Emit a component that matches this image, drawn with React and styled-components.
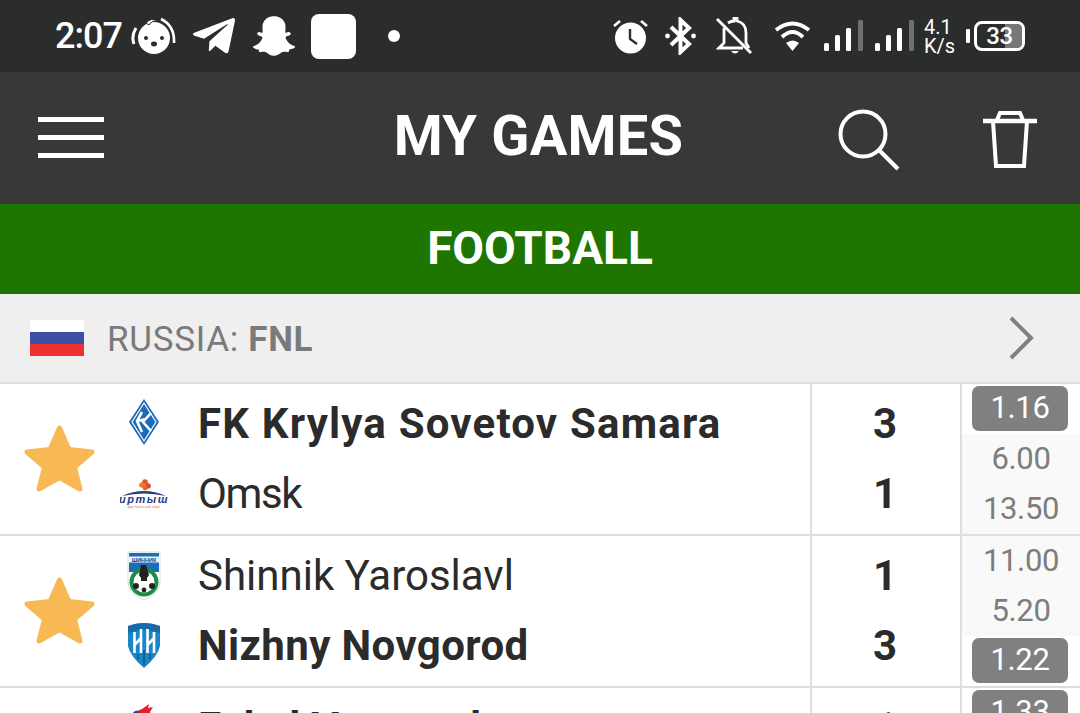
import styled, { createGlobalStyle } from "styled-components";
import { FaTelegramPlane, FaSnapchatGhost } from "react-icons/fa";

const matches = [
  {
    home: { name: "FK Krylya Sovetov Samara", logo: "krylya", win: true, score: 3, track: 1.2 },
    away: { name: "Omsk", logo: "irtysh", score: 1, track: -1.4 },
    odds: ["1.16", "6.00", "13.50"],
    picked: 0,
    star: true,
  },
  {
    home: { name: "Shinnik Yaroslavl", logo: "shinnik", score: 1, track: 0 },
    away: { name: "Nizhny Novgorod", logo: "nn", win: true, score: 3, track: 0.4 },
    odds: ["11.00", "5.20", "1.22"],
    picked: 2,
    star: true,
  },
  {
    home: { name: "Fakel Voronezh", logo: "fakel", win: true, score: 1, track: 0.4 },
    away: { name: "", logo: "", score: "", track: 0 },
    odds: ["1.33", "", ""],
    picked: 0,
  },
];

function Logo({ kind }) {
  if (kind === "krylya") {
    return (
      <svg width="48" height="50" viewBox="0 0 48 50">
        <path d="M24 1 L39 24 L24 47 L9 24 Z" fill="#1b6cb8" />
        <path d="M24 5 L36 24 L24 43 L12 24 Z" fill="none" stroke="#fff" strokeWidth="1.2" />
        <path d="M22 14 L17 23 L22 34 M18 23 L26 21 M31 15 L23 24 L31 33" stroke="#fff" strokeWidth="2.6" fill="none" />
      </svg>
    );
  }
  if (kind === "irtysh") {
    return (
      <svg width="48" height="32" viewBox="0 0 48 32">
        <circle cx="25" cy="5" r="2.8" fill="#e2542a" />
        <circle cx="22" cy="8" r="2.8" fill="#ee7a35" />
        <circle cx="28" cy="9" r="2.8" fill="#d94a26" />
        <circle cx="25" cy="11" r="2.4" fill="#e8642e" />
        <path d="M2 19 Q24 9 46 19 Q24 14 2 19 Z" fill="#1f3d8a" />
        <IrtyshName x="24" y="26" textAnchor="middle">иртыш</IrtyshName>
        <IrtyshSub x="24" y="31" textAnchor="middle">футбольный клуб</IrtyshSub>
      </svg>
    );
  }
  if (kind === "shinnik") {
    return (
      <svg width="48" height="50" viewBox="0 0 48 50">
        <path d="M8 2 H40 V31 Q40 44 24 50 Q8 44 8 31 Z" fill="#fff" stroke="#d5dcd7" />
        <path d="M9 3 H39 V22 H9 Z" fill="#1c6fb5" />
        <path d="M9 6.5 H39 V12.5 H9 Z" fill="#eef3f6" />
        <ShinnikName x="24" y="11.5" textAnchor="middle">ШИННИК</ShinnikName>
        <circle cx="24" cy="32" r="14.5" fill="#1d8c48" />
        <circle cx="24" cy="32" r="10.5" fill="#fff" />
        <path d="M21 15 h5 l2 6 l1 4 l-2 3 v3 h-6 v-3 l-2 -3 l1 -4 Z" fill="#222" />
        <circle cx="16" cy="36" r="3" fill="#222" />
        <circle cx="32" cy="36" r="3" fill="#222" />
        <circle cx="24" cy="40" r="2.4" fill="#222" />
      </svg>
    );
  }
  if (kind === "nn") {
    return (
      <svg width="48" height="50" viewBox="0 0 48 50">
        <path d="M8 6 Q24 0 40 6 V26 Q38 36 24 48 Q10 36 8 26 Z" fill="#1a86c8" />
        <path d="M8 6 Q24 0 40 6 V13 Q24 7 8 13 Z" fill="#166aa8" />
        <path d="M14.5 12 V33 M21 9 V33 M14.5 25 L21 18 M27.5 9 V33 M34 12 V33 M27.5 25 L34 18" stroke="#fff" strokeWidth="2.6" fill="none" />
        <path d="M18 34 V39 M24 30 V45 M30 34 V39" stroke="#0e5d96" strokeWidth="2" fill="none" />
      </svg>
    );
  }
  if (kind === "fakel") {
    return (
      <svg width="48" height="50" viewBox="0 0 48 50">
        <path d="M15 14 Q17 8 22 7 L29 2 L28 6 L33 5 L30 10 Q33 16 30 20 H15 Z" fill="#e3212b" />
        <path d="M12 12 Q16 6 20 10 L16 20 H12 Z" fill="#1c4f9c" />
      </svg>
    );
  }
  return null;
}

function Star() {
  return (
    <svg width="72" height="70" viewBox="0 0 72 70">
      <path
        d="M35.5 4 L45 25.5 L68 28 L50.5 43 L56 65 L35.5 53.5 L15 65 L20.5 43 L3 28 L26 25.5 Z"
        fill="#f8b854"
        stroke="#f8b854"
        strokeWidth="5"
        strokeLinejoin="round"
      />
    </svg>
  );
}

function SignalBars() {
  return (
    <svg width="39" height="32" viewBox="0 0 39 32">
      <rect x="0" y="23" width="5" height="8" rx="1.5" fill="#fff" />
      <rect x="11" y="15" width="5" height="16" rx="1.5" fill="#fff" />
      <rect x="22" y="8" width="5" height="23" rx="1.5" fill="#fff" />
      <rect x="34" y="0" width="5" height="31" rx="1.5" fill="#6f7171" />
    </svg>
  );
}

function App() {
  return (
    <Page>
      <GlobalStyle />
      <StatusBar>
        <StatusLeft>
          <Time>2:07</Time>
          <Slot $w={45} $ml={9}>
            <svg width="45" height="38" viewBox="0 0 45 38">
              <circle cx="23" cy="21" r="16" fill="#fff" />
              <path d="M15 6 Q20 0 27 4 Q21 3 18 8 Z" fill="#fff" stroke="#2b2d2d" strokeWidth="1" />
              <path d="M30 2 Q44 9 43 26" fill="none" stroke="#fff" strokeWidth="2.6" />
              <path d="M5 11 Q0 19 3 27" fill="none" stroke="#fff" strokeWidth="3" />
              <circle cx="15" cy="21" r="2" fill="#2b2d2d" />
              <circle cx="31" cy="21" r="2" fill="#2b2d2d" />
              <ellipse cx="23" cy="27" rx="3" ry="2.4" fill="#2b2d2d" />
            </svg>
          </Slot>
          <Slot $w={42} $ml={17}>
            <FaTelegramPlane size={48} color="#fff" />
          </Slot>
          <Slot $w={42} $ml={18}>
            <FaSnapchatGhost size={42} color="#fff" />
          </Slot>
          <WhiteSquare />
          <Dot />
        </StatusLeft>
        <StatusRight>
          <Slot $w={37}>
            <svg width="37" height="35" viewBox="0 0 37 35">
              <circle cx="18.5" cy="19" r="15.5" fill="#fff" />
              <path d="M18 10 V20 L25 25" fill="none" stroke="#2b2d2d" strokeWidth="2.4" />
              <path d="M2 7 L8 2 M35 7 L29 2" stroke="#fff" strokeWidth="2.6" />
            </svg>
          </Slot>
          <Slot $w={31} $ml={16}>
            <svg width="31" height="38" viewBox="0 0 31 38">
              <path d="M6 10 L24 27 L15.5 35 V3 L24 11 L6 28" fill="none" stroke="#fff" strokeWidth="4" />
              <circle cx="2.5" cy="19" r="2.4" fill="#fff" />
              <circle cx="28.5" cy="19" r="2.4" fill="#fff" />
            </svg>
          </Slot>
          <Slot $w={36} $ml={20}>
            <svg width="36" height="38" viewBox="0 0 36 38">
              <path d="M12 6 Q15 4 18 4 V1.5 H21 V4 Q30 6 30 16 V26 L33 31" fill="none" stroke="#fff" strokeWidth="2.8" />
              <path d="M8 11 V26 L3 31 H27" fill="none" stroke="#fff" strokeWidth="2.8" />
              <path d="M15 34 Q19 39 23 34 Z" fill="#fff" />
              <path d="M1 2 L35 36" stroke="#fff" strokeWidth="2.8" />
            </svg>
          </Slot>
          <Slot $w={37} $ml={22}>
            <svg width="37" height="32" viewBox="0 0 37 32">
              <path d="M2 10 Q18.5 -3 35 10" fill="none" stroke="#fff" strokeWidth="3.8" />
              <path d="M8 17 Q18.5 7 29 17" fill="none" stroke="#fff" strokeWidth="3.8" />
              <path d="M18.5 31 L12 23 Q18.5 18 25 23 Z" fill="#fff" />
            </svg>
          </Slot>
          <Slot $w={39} $ml={13}>
            <SignalBars />
          </Slot>
          <Slot $w={39} $ml={12}>
            <SignalBars />
          </Slot>
          <Speed>
            <span>4.1</span>
            <span>K/s</span>
          </Speed>
          <BatteryNub />
          <Battery>
            <BatteryFill />
            <BatteryText>33</BatteryText>
          </Battery>
        </StatusRight>
      </StatusBar>

      <Header>
        <Burger>
          <i />
          <i />
          <i />
        </Burger>
        <Title>MY GAMES</Title>
        <HeaderActions>
          <svg width="62" height="62" viewBox="0 0 62 62">
            <circle cx="25" cy="25" r="22.5" fill="none" stroke="#fff" strokeWidth="4" />
            <path d="M41 41 L60 60" stroke="#fff" strokeWidth="4" />
          </svg>
          <svg width="54" height="58" viewBox="0 0 54 58">
            <path d="M0 10 H54" stroke="#fff" strokeWidth="4.5" />
            <path d="M14 9 L17 2 H37 L40 9" fill="none" stroke="#fff" strokeWidth="4" />
            <path d="M10 10 L13 55 H41 L44 10" fill="none" stroke="#fff" strokeWidth="4" />
          </svg>
        </HeaderActions>
      </Header>

      <SportBar>FOOTBALL</SportBar>

      <League>
        <Flag>
          <i />
          <i />
          <i />
        </Flag>
        <LeagueName>
          RUSSIA: <b>FNL</b>
        </LeagueName>
        <svg width="26" height="44" viewBox="0 0 26 44">
          <path d="M3 2 L23 22 L3 42" fill="none" stroke="#808080" strokeWidth="4" />
        </svg>
      </League>

      {matches.map((m, idx) => (
        <Row key={idx}>
          <Teams>
            <StarCell>{m.star && <Star />}</StarCell>
            <TeamList>
              {[m.home, m.away].map((t, i) => (
                <Team key={i}>
                  <LogoBox>
                    <Logo kind={t.logo} />
                  </LogoBox>
                  <TeamName $win={t.win} $track={t.track}>
                    {t.name}
                  </TeamName>
                </Team>
              ))}
            </TeamList>
          </Teams>
          <Scores>
            <Score>{m.home.score}</Score>
            <Score>{m.away.score}</Score>
          </Scores>
          <Odds>
            {m.odds.map((o, i) => (
              <OddCell key={i} $picked={i === m.picked}>
                {i === m.picked ? <Pill>{o}</Pill> : o}
              </OddCell>
            ))}
          </Odds>
        </Row>
      ))}
    </Page>
  );
}

const GlobalStyle = createGlobalStyle`
  html, body {
    margin: 0;
    padding: 0;
    background: #fff;
    overflow: hidden;
  }
  * {
    box-sizing: border-box;
  }
`;

const Page = styled.div`
  width: 1080px;
  height: 713px;
  overflow: hidden;
  font-family: "Roboto", "Liberation Sans", sans-serif;
`;

const StatusBar = styled.div`
  height: 72px;
  background: #2b2d2d;
  display: flex;
  justify-content: space-between;
  align-items: center;
  padding: 0 55px 0 55px;
`;

const StatusLeft = styled.div`
  display: flex;
  align-items: center;
`;

const StatusRight = styled.div`
  display: flex;
  align-items: center;
`;

const Time = styled.div`
  color: #fff;
  font-size: 36px;
  font-weight: 500;
  width: 67px;
  white-space: nowrap;
  letter-spacing: -1px;
`;

const Slot = styled.div`
  width: ${(p) => p.$w}px;
  margin-left: ${(p) => p.$ml || 0}px;
  display: flex;
  justify-content: center;
  align-items: center;
`;

const WhiteSquare = styled.div`
  width: 45px;
  height: 45px;
  margin-left: 16px;
  background: #fff;
  border-radius: 8px;
`;

const Dot = styled.div`
  width: 12px;
  height: 12px;
  margin-left: 32px;
  background: #fff;
  border-radius: 50%;
`;

const Speed = styled.div`
  width: 32px;
  margin-left: 10px;
  color: #fff;
  font-size: 20px;
  line-height: 18px;
  display: flex;
  flex-direction: column;
  gap: 1px;
  align-items: flex-start;
  & span {
    display: block;
    height: 18px;
  }
`;

const BatteryNub = styled.div`
  width: 4px;
  height: 14px;
  margin-left: 10px;
  background: #fff;
  border-radius: 1px;
`;

const Battery = styled.div`
  position: relative;
  width: 51px;
  height: 30px;
  margin-left: 4px;
  border: 3px solid #fff;
  border-radius: 8px;
  display: flex;
  align-items: center;
  justify-content: center;
  overflow: hidden;
`;

const BatteryFill = styled.div`
  position: absolute;
  right: 0;
  top: 0;
  bottom: 0;
  width: 17px;
  background: #777;
`;

const BatteryText = styled.span`
  position: relative;
  color: #fff;
  font-size: 24px;
  font-weight: 500;
  letter-spacing: -0.5px;
`;

const Header = styled.div`
  height: 132px;
  background: #383838;
  display: grid;
  grid-template-columns: 1fr auto 1fr;
  align-items: center;
  padding: 0 43px 0 38px;
`;

const Burger = styled.div`
  display: flex;
  flex-direction: column;
  gap: 13px;
  width: 66px;
  margin-bottom: 1px;
  & i {
    display: block;
    height: 5px;
    background: #fff;
  }
`;

const Title = styled.div`
  color: #fff;
  font-size: 56px;
  font-weight: 700;
  letter-spacing: 0.2px;
  white-space: nowrap;
  padding: 0 0 4px 2px;
`;

const HeaderActions = styled.div`
  display: flex;
  justify-content: flex-end;
  align-items: center;
  gap: 83px;
  padding-top: 3px;
`;

const SportBar = styled.div`
  height: 90px;
  background: #1e7500;
  color: #fff;
  font-size: 46px;
  font-weight: 700;
  display: flex;
  align-items: center;
  justify-content: center;
  padding-bottom: 2px;
`;

const League = styled.div`
  height: 90px;
  background: #efefef;
  border-bottom: 2px solid #dedede;
  display: flex;
  align-items: center;
  padding: 0 46px 0 30px;
`;

const Flag = styled.div`
  width: 54px;
  height: 36px;
  display: flex;
  flex-direction: column;
  & i {
    flex: 1;
  }
  & i:nth-child(1) {
    background: #fff;
  }
  & i:nth-child(2) {
    background: #3c50a6;
  }
  & i:nth-child(3) {
    background: #ee3030;
  }
`;

const LeagueName = styled.div`
  flex: 1;
  margin-left: 23px;
  padding-top: 3px;
  color: #7a7a7a;
  font-size: 35px;
  letter-spacing: 0.7px;
  & b {
    font-weight: 700;
  }
`;

const Row = styled.div`
  height: 152px;
  display: grid;
  grid-template-columns: 812px 150px 118px;
  border-bottom: 2px solid #dedede;
`;

const Teams = styled.div`
  display: flex;
  align-items: center;
  border-right: 2px solid #dedede;
`;

const StarCell = styled.div`
  width: 119px;
  padding-left: 24px;
  display: flex;
  align-items: center;
`;

const TeamList = styled.div`
  display: flex;
  flex-direction: column;
  padding-bottom: 2px;
`;

const Team = styled.div`
  height: 70px;
  display: flex;
  align-items: center;
`;

const LogoBox = styled.div`
  width: 48px;
  display: flex;
  justify-content: center;
  margin-left: 1px;
`;

const TeamName = styled.div`
  margin-left: 30px;
  color: #2b2b2b;
  font-size: 42px;
  font-weight: ${(p) => (p.$win ? 700 : 400)};
  letter-spacing: ${(p) => p.$track}px;
  white-space: nowrap;
`;

const Scores = styled.div`
  border-right: 2px solid #dedede;
  display: flex;
  flex-direction: column;
  justify-content: center;
  padding: 0 2px 2px 0;
`;

const Score = styled.div`
  height: 70px;
  display: flex;
  align-items: center;
  justify-content: center;
  color: #2b2b2b;
  font-size: 42px;
  font-weight: 700;
`;

const Odds = styled.div`
  display: flex;
  flex-direction: column;
  background: #f9f9f9;
`;

const OddCell = styled.div`
  height: 50px;
  flex: none;
  display: flex;
  align-items: center;
  justify-content: center;
  color: #7d7d7d;
  font-size: 31px;
  letter-spacing: -0.4px;
  padding-bottom: ${(p) => (p.$picked ? 0 : 2)}px;
  background: ${(p) => (p.$picked ? "#fff" : "transparent")};
`;

const Pill = styled.div`
  width: 96px;
  height: 45px;
  margin: 2px 2px 3px 0;
  padding-bottom: 2px;
  background: #808080;
  border-radius: 7px;
  color: #fff;
  display: flex;
  align-items: center;
  justify-content: center;
`;

const IrtyshName = styled.text`
  font-family: "Liberation Sans", sans-serif;
  font-size: 11px;
  font-style: italic;
  font-weight: 700;
  letter-spacing: 1.5px;
  fill: #1f3d8a;
`;

const IrtyshSub = styled.text`
  font-family: "Liberation Sans", sans-serif;
  font-size: 4px;
  fill: #d98a3a;
`;

const ShinnikName = styled.text`
  font-family: "Liberation Sans", sans-serif;
  font-size: 5.5px;
  font-weight: 700;
  fill: #1c3f66;
`;

export default App;
